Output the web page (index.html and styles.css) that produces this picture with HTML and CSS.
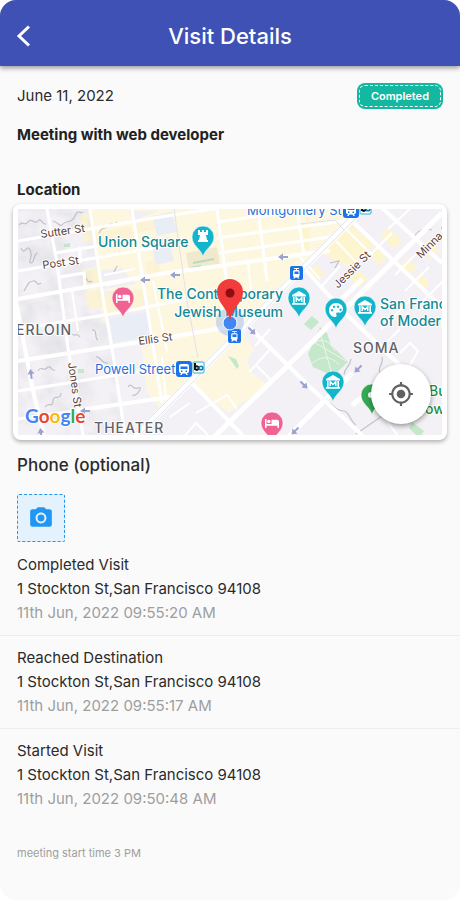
FILE: index.html
```html
<!DOCTYPE html>
<html lang="en">
<head>
  <meta charset="UTF-8">
  <meta name="viewport" content="width=device-width, initial-scale=1.0">
  <title>Visit Details</title>
  <link rel="stylesheet" href="styles.css">
</head>
<body>

  <div class="screen">
    <header class="app-bar">
      <button class="back" aria-label="Back">
        <svg width="15" height="22" viewBox="0 0 15 22"><path d="M13 1.500L3 11l10 9.500" fill="none" stroke="#fff" stroke-width="3"/></svg>
      </button>
      <h1>Visit Details</h1>
    </header>

    <main>
      <section class="summary">
        <div class="summary-top">
          <span class="date">June 11, 2022</span>
          <span class="badge"><span class="badge-label">Completed</span></span>
        </div>
        <h2>Meeting with web developer</h2>
      </section>

      <section class="location">
        <h2>Location</h2>
        <div class="map-card">
          <svg class="map" viewBox="18 208 424 226" preserveAspectRatio="xMidYMid slice" role="img" aria-label="Map of San Francisco">
            <defs>
              <path id="pin" d="M0 20C-1.500 12-11 9-11 0A11 11 0 0 1 11 0C11 9 1.500 12 0 20z"/>
              <g id="museum" fill="#fff">
                <path d="M0-7L7-3v1.500H-7V-3zM-7 5H7v1.800H-7zM-6-1h1.600v6H-6zM4.400-1H6v6H4.400z"/>
                <path d="M-2.800 4V-.2L0 2.600 2.800-.2V4" fill="none" stroke="#fff" stroke-width="1.400"/>
              </g>
              <path id="bed" fill="#fff" d="M-7-4h1.500v5H-.5v-4.200H5A2 2 0 0 1 7-1.200V5H5.500V2.800h-11V5H-7zM-3.200-3.200a1.700 1.700 0 1 1 0 3.400 1.700 1.700 0 0 1 0-3.400z"/>
              <path id="arrow" fill="#9aa3cf" d="M-5 0L0-3.500V-1H5V1H0V3.500z"/>
              <filter id="relief" x="0" y="0" width="100%" height="100%">
                <feTurbulence type="fractalNoise" baseFrequency="0.045" numOctaves="3" seed="8"/>
                <feColorMatrix values="0 0 0 0 .6  0 0 0 0 .6  0 0 0 0 .65  .8 0 0 0 -.3"/>
              </filter>
              <clipPath id="hills"><path d="M18 208H88L112 345 125 434H18z"/></clipPath>
            </defs>

            <!-- land -->
            <path fill="#f3f1f5" d="M0 200H460V440H0z"/>
            <path fill="#fef7e0" d="M90 208H358L228 338 160 408 147 390 140 330 102 320 100 290 86 290 80 270 98 264z"/>
            <path fill="#fef7e0" d="M165 352L228 340 244 334 254 348 247 360 252 372 268 384 228 412 190 380z"/>
            <path fill="#f1eff4" d="M95 270l27-3 14 16-36 6zM129 210l30 0-26 10zM104 290h40l4 26-40 6z"/>
            <path fill="#fcf3d4" d="M80 215l9-3 3 28-8 1zM95 232l36-7 3 12-38 8zM136 222l36-6 2 8-36 8zM104 294l38-6 3 20-39 7zM82 272l17-4 4 13-17 8zM84 292l17-3 2 17-14 2zM145 262l13-4 3 16-12 4z"/>
            <path fill="#e9edf5" d="M110 318l38-7 5 23-40 8zM150 240l18-4 6 24-18 4zM152 215l20-4 5 20-20 4z"/>
            <path fill="#fdf5cf" d="M325 242l24-20 22 20-17 26-30-14zM301 222l10 2-2 26-8-6zM307 272l9-8 8 8-8 9zM360 240l9-7 8 8-8 7zM368 252l9-7 10 11-8 9zM380 234l9-7 13 13-8 8zM400 265l8-8 9 9-8 8zM413 279l7-7 10 10-8 9zM420 247l9-8 10 11-8 8zM350 278l9-9 9 9-9 9z"/>
            <path fill="#f0e9cd" d="M186 252l31-6 3 19-31 5z"/>
            <path fill="none" stroke="#b7deb8" stroke-width="2" d="M193 262l21-4M191 267l10-2"/>
            <path fill="#c4e8c9" d="M304 323l8-8 7 6-8 8zM320 326l7 6 4 12 17 17-15 14-20-9-5-13zM228 355l8 3 3 7-2 3-5-7zM78 368h6v4h-6zM64 243l6-1v4h-6zM412 421l12 9-5 7-10-10z"/>
            <path fill="none" stroke="#eef6ef" d="M309 350c4-14 20-14 26 0M312 362c10-7 18-8 27 2M319 328l13 45M346 360l-34-20"/>

            <!-- hills -->
            <g clip-path="url(#hills)"><rect x="18" y="208" width="108" height="226" filter="url(#relief)"/></g>
            <g fill="none" stroke="#b6b7bf" stroke-width="1.200" opacity=".8">
              <path d="M19 224c4-5 6 2 9-3s7 3 10-1 4 4 8 3M53 220c5 1 7 7 10 3s9 0 12-8 6-1 8-4M21 247c4 9 5-5 9 2s-3 13 1 13 2-10 7-10M24 290c5-8 4-9 9-10s3 6 8 2"/>
              <path d="M99 232c4-8 5-2 9-7s6 2 9-4M113 272c4-3 1-6 5-7M83 278c4-4 4 6 9 2M72 333c3 4 4-3 8 3M92 329c6-1 2 9 6 10M38 370c3-6 5 1 9-3s4 4 8 2M96 356c5-1 6 8 12 6M45 406c4-6 7 2 8-6s7 1 8-8M128 386c4-6 4 4 10 1s-1 9-6 7"/>
              <path d="M413 240c3-11 11-13 19-11M351 358c-1 9-7 8-7 16M382 356c2 9-6 9-1 18M330 262l9-2-4 7M330 402c6 6 9 8 14 8s7 12 12 14M356 433l26-18"/>
            </g>

            <!-- streets -->
            <g fill="none" stroke="#fff" stroke-width="3">
              <path d="M47 208L57 262 68 347 83 434M90 208L103 297 112 347 125 434M132 208L146 300 162 402M217 208L229 300M258 208L267 280M297 208L304 254"/>
              <path d="M18 240L160 216 218 207M18 270L160 246M217 237L345 220M219 252L330 236M217 221L300 210M18 328L117 312 217 292M18 390L148 369M55 252L98 245M80 246V262M60 276L84 272 85 286M106 284L140 277M18 418L170 396" stroke-width="3"/>
              <path d="M72 290L78 330M153 280L167 350M162 356L166 400M248 262L252 300M104 274L135 268" stroke-width="2"/>
            </g>
            <g fill="none" stroke="#fff" stroke-width="4">
              <path d="M18 298L160 273 304 253 330 250M18 360L160 338 228 326M14 290L33 390 44 434M80 409L170 396"/>
              <path d="M243 320L310 386 366 438M190 380L246 438M350 218L448 312M380 205L442 262M303 266L345 312 404 368"/>
              <path d="M212 438L310 343 345 308 442 212M286 438L352 372M340 300L362 278M352 404L370 390" stroke-width="5"/>
            </g>
            <g fill="none" stroke="#fff" stroke-width="2">
              <path d="M270 348l-14 16 14 14M255 365l-6 6M196 412l31-18 10 14M182 438l14-16 12 12M336 240l22 23M388 228l22-20M370 254l22-22M395 274l22-22M405 290l24-24M420 303l22-22M376 242l54 52M343 225l30 30M400 352l10-10 8 8-8 14M388 340l12-12M411 298l-30 30M255 345l15-17M170 416l20-14M376 405l24 33M320 287l20-22M300 256l20 22M330 395l20-18"/>
            </g>

            <!-- market street and transit line -->
            <path fill="none" stroke="#fff" stroke-width="7" d="M364 206L135 436"/>
            <path fill="none" stroke="#dfe2ec" d="M361 205L132 435M366 207L137 437M174 208L187 300 198 357M300 223l35-4 9 10"/>

            <use href="#arrow" x="145" y="279"/>
            <use href="#arrow" x="175" y="274"/>
            <use href="#arrow" x="283" y="256"/>
            <use href="#arrow" x="85" y="410"/>
            <use href="#arrow" transform="translate(31 373) rotate(82)"/>
            <use href="#arrow" transform="translate(41 432) rotate(82)"/>
            <use href="#arrow" transform="translate(252 330) rotate(225)"/>
            <use href="#arrow" transform="translate(304 384) rotate(225)"/>
            <use href="#arrow" transform="translate(358 368) rotate(-45)"/>
            <use href="#arrow" transform="translate(295 430) rotate(-45)"/>

            <!-- street names -->
            <g class="street">
              <text transform="translate(41 237) rotate(-8)">Sutter St</text>
              <text transform="translate(43 268) rotate(-8)">Post St</text>
              <text transform="translate(139 344) rotate(-8)">Ellis St</text>
              <text transform="translate(68 362) rotate(82)">Jones St</text>
              <text transform="translate(338 288) rotate(-45)">Jessie St</text>
              <text transform="translate(421 258) rotate(-45)">Minna St</text>
            </g>

            <g class="area">
              <text x="16" y="334">ERLOIN</text>
              <text x="94" y="432">THEATER</text>
              <text x="353" y="352">SOMA</text>
            </g>

            <g class="place">
              <text x="98" y="246">Union Square</text>
              <text x="283" y="298" text-anchor="end">The Contemporary</text>
              <text x="283" y="316" text-anchor="end">Jewish Museum</text>
              <text x="380" y="308">San Francisco</text>
              <text x="380" y="325">of Modern Art</text>
            </g>
            <g class="station">
              <text x="247" y="214">Montgomery St</text>
              <text x="95" y="373">Powell Street</text>
            </g>
            <g class="park">
              <text x="429" y="395">Buena</text>
              <text x="425" y="413">owers</text>
            </g>

            <!-- stations -->
            <g id="train">
              <rect x="176" y="360" width="16" height="16" rx="3" fill="#1a73e8"/>
              <path fill="#fff" fill-rule="evenodd" d="M181 363h6a2 2 0 0 1 2 2v6l-2 1.500 1 1.500h-1.500l-1-1.500h-3l-1 1.500H180l1-1.500-2-1.500v-6a2 2 0 0 1 2-2zM180.500 365.500v2.500h7v-2.500zM181 369.500v1.500h1.500v-1.500zM185.500 369.500v1.500h1.500v-1.500z"/>
              <rect x="193" y="361" width="11" height="11" rx="1" fill="#fff" stroke="#23b1dc"/>
              <path fill="none" stroke="#111" stroke-width="2" d="M195 362v7M195 367a1.800 1.800 0 1 1 0 .1"/>
              <circle cx="201" cy="367" r="1.800" fill="none" stroke="#0d7fae" stroke-width="1.600"/>
            </g>
            <use href="#train" x="167" y="-159"/>
            <g id="tram">
              <rect x="290" y="265" width="13" height="14" rx="2" fill="#1a73e8"/>
              <path fill="#fff" fill-rule="evenodd" d="M294 267h5v1h-2v1h1.500l1 1v5l-1 1 1 1.500h-1.500l-.7-1h-2l-.7 1h-1.500l1-1.500-1-1v-5l1-1H296v-1h-2zM294.500 270.500v2.500h4v-2.500z"/>
            </g>
            <use href="#tram" x="-62" y="63"/>

            <!-- pins -->
            <g stroke="#fff" stroke-width=".6">
              <use href="#pin" x="203" y="236" fill="#12b5cb"/>
              <use href="#pin" x="299" y="297" fill="#12b5cb"/>
              <use href="#pin" x="336" y="308" fill="#12b5cb"/>
              <use href="#pin" x="365" y="306" fill="#12b5cb"/>
              <use href="#pin" x="333" y="381" fill="#12b5cb"/>
              <use href="#pin" x="123" y="297" fill="#f06292"/>
              <use href="#pin" x="272" y="422" fill="#f06292"/>
              <use href="#pin" x="372" y="394" fill="#34a853"/>
            </g>
            <circle cx="371" cy="394" r="3" fill="#fff"/>
            <path fill="#fff" d="M198 229h2v2h2v-2h2v2h2v-2h2v5h-2l1 5h1v2h-10v-2h1l1-5h-2z"/>
            <path fill="#fff" fill-rule="evenodd" d="M336 302c4 0 7 2.500 7 6s-3 4-5 3.500-2 1-1.500 2.500-.5 2-1.500 2c-4 0-6-3.500-6-7s3-7 7-7zM332 308a1.200 1.200 0 1 0 .1 0zM334 304.500a1.200 1.200 0 1 0 .1 0zM338 304.500a1.200 1.200 0 1 0 .1 0zM340.500 307.500a1.200 1.200 0 1 0 .1 0z"/>
            <use href="#museum" x="299" y="297"/>
            <use href="#museum" x="365" y="306"/>
            <use href="#museum" x="333" y="381"/>
            <use href="#bed" x="123" y="297"/>
            <use href="#bed" x="272" y="422"/>

            <!-- current position -->
            <circle cx="230" cy="321" r="14" fill="#4285f4" opacity=".25"/>
            <circle cx="230" cy="322" r="7" fill="#4285f4" stroke="#fff"/>
            <path fill="#f23b3b" d="M230 321C229 308 217 302 217 291A13 13 0 0 1 243 291C243 302 231 308 230 321z"/>
            <circle cx="230" cy="292" r="4.500" fill="#8f0c12"/>

            <text class="google" x="25" y="422"><tspan fill="#4285f4">G</tspan><tspan fill="#ea4335">o</tspan><tspan fill="#fbbc05">o</tspan><tspan fill="#4285f4">g</tspan><tspan fill="#34a853">l</tspan><tspan fill="#ea4335">e</tspan></text>
          </svg>
          <button class="locate" aria-label="My location">
            <svg width="26" height="26" viewBox="0 0 24 24" fill="#616161"><path d="M12 8c-2.210 0-4 1.790-4 4s1.790 4 4 4 4-1.790 4-4-1.790-4-4-4zm8.940 3c-.46-4.170-3.770-7.480-7.940-7.940V1h-2v2.060C6.830 3.520 3.520 6.830 3.060 11H1v2h2.060c.46 4.170 3.770 7.480 7.940 7.940V23h2v-2.060c4.170-.46 7.480-3.770 7.940-7.940H23v-2h-2.060zM12 19c-3.870 0-7-3.130-7-7s3.130-7 7-7 7 3.130 7 7-3.130 7-7 7z"/></svg>
          </button>
        </div>
      </section>

      <section class="photo">
        <h3>Phone (optional)</h3>
        <button class="add-photo" aria-label="Add photo">
          <svg width="26" height="26" viewBox="0 0 24 24" fill="#2196f3"><circle cx="12" cy="12" r="3.200"/><path d="M9 2L7.170 4H4c-1.100 0-2 .9-2 2v12c0 1.100.9 2 2 2h16c1.100 0 2-.9 2-2V6c0-1.100-.9-2-2-2h-3.170L15 2H9zm3 15c-2.760 0-5-2.240-5-5s2.240-5 5-5 5 2.240 5 5-2.240 5-5 5z"/></svg>
        </button>
      </section>

      <ul class="timeline">
        <li>
          <p>Completed Visit</p>
          <p>1 Stockton St,San Francisco 94108</p>
          <p class="time">11th Jun, 2022 09:55:20 AM</p>
        </li>
        <li>
          <p>Reached Destination</p>
          <p>1 Stockton St,San Francisco 94108</p>
          <p class="time">11th Jun, 2022 09:55:17 AM</p>
        </li>
        <li>
          <p>Started Visit</p>
          <p>1 Stockton St,San Francisco 94108</p>
          <p class="time">11th Jun, 2022 09:50:48 AM</p>
        </li>
      </ul>

      <p class="note">meeting start time 3 PM</p>
    </main>
  </div>

</body>
</html>
```
FILE: styles.css
```css
* {
  box-sizing: border-box;
}

body {
  font-family: Inter, "Liberation Sans", sans-serif;
  font-size: 15px;
  line-height: 24px;
  margin: 0;
  color: #2b2b2b;
  background-color: #fff;
}

h1, h2, h3, p, ul {
  margin: 0;
  padding: 0;
}

button {
  padding: 0;
  border: none;
  cursor: pointer;
}

button svg {
  display: block;
}

.screen {
  min-height: 100vh;
  background-color: #fafafa;
  border-radius: 16px;
  overflow: hidden;
}

/* Header */
.app-bar {
  display: grid;
  grid-template-columns: 48px 1fr 48px;
  align-items: center;
  padding: 16px 0 10px;
  color: #fff;
  background-color: #3f51b5;
  box-shadow: 0 2px 5px rgba(0, 0, 0, 0.4);
}

.app-bar h1 {
  font-size: 22px;
  font-weight: 500;
  line-height: 40px;
  text-align: center;
}

.back {
  display: flex;
  align-items: center;
  height: 40px;
  padding-left: 16px;
  background: none;
}

/* Summary */
.summary {
  padding: 17px 17px 0;
}

.summary-top {
  display: flex;
  justify-content: space-between;
  align-items: center;
}

.badge {
  padding: 2px;
  border-radius: 8px;
  background-color: #14b8a0;
}

.badge-label {
  display: block;
  padding: 0 11px;
  border: 1px dashed #fff;
  border-radius: 6px;
  color: #fff;
  font-size: 11px;
  font-weight: 600;
  line-height: 20px;
}

h2 {
  color: #212121;
  font-size: 15px;
  font-weight: 700;
  line-height: 24px;
}

.summary h2 {
  margin-top: 14px;
}

/* Map */
.location {
  padding: 31px 13px 0;
}

.location h2 {
  padding: 0 4px;
}

.map-card {
  position: relative;
  margin-top: 2px;
  padding: 5px;
  border-radius: 8px;
  background-color: #fff;
  box-shadow: 0 2px 4px rgba(0, 0, 0, 0.3);
}

.map {
  display: block;
  width: 100%;
}

.street {
  font-size: 11px;
  fill: #5d4037;
}

.area {
  font-size: 14px;
  font-weight: 500;
  letter-spacing: 1px;
  fill: #5f6368;
}

.place,
.park {
  font-size: 14px;
  font-weight: 500;
  fill: #118a94;
}

.station {
  font-size: 13px;
  fill: #2b6fd6;
}

.park {
  fill: #1e8e3e;
}

.street,
.area,
.place,
.station,
.park {
  stroke: #fff;
  stroke-width: 2px;
  stroke-linejoin: round;
  paint-order: stroke;
}

.google {
  font-family: Lato, sans-serif;
  font-size: 19px;
  font-weight: 700;
  stroke: #fff;
  stroke-width: 2px;
  paint-order: stroke;
}

.locate {
  position: absolute;
  right: 16px;
  bottom: 16px;
  display: flex;
  justify-content: center;
  align-items: center;
  width: 60px;
  height: 60px;
  border-radius: 50%;
  background-color: #fff;
  box-shadow: 0 2px 5px rgba(0, 0, 0, 0.4);
}

/* Photo */
.photo {
  padding: 13px 17px 1px;
}

.photo h3 {
  font-size: 17px;
  font-weight: 500;
  line-height: 24px;
}

.add-photo {
  display: flex;
  justify-content: center;
  align-items: center;
  width: 48px;
  height: 48px;
  margin-top: 17px;
  border: 1px dashed #2196f3;
  border-radius: 2px;
  background-color: #e3f2fd;
}

/* Timeline */
.timeline {
  list-style: none;
}

.timeline li {
  padding: 10px 17px;
  border-bottom: 1px solid #eee;
}

.timeline li:last-child {
  border-bottom: none;
}

.time {
  color: #9e9e9e;
}

.note {
  padding: 20px 17px;
  color: #9e9e9e;
  font-size: 11px;
}
```
